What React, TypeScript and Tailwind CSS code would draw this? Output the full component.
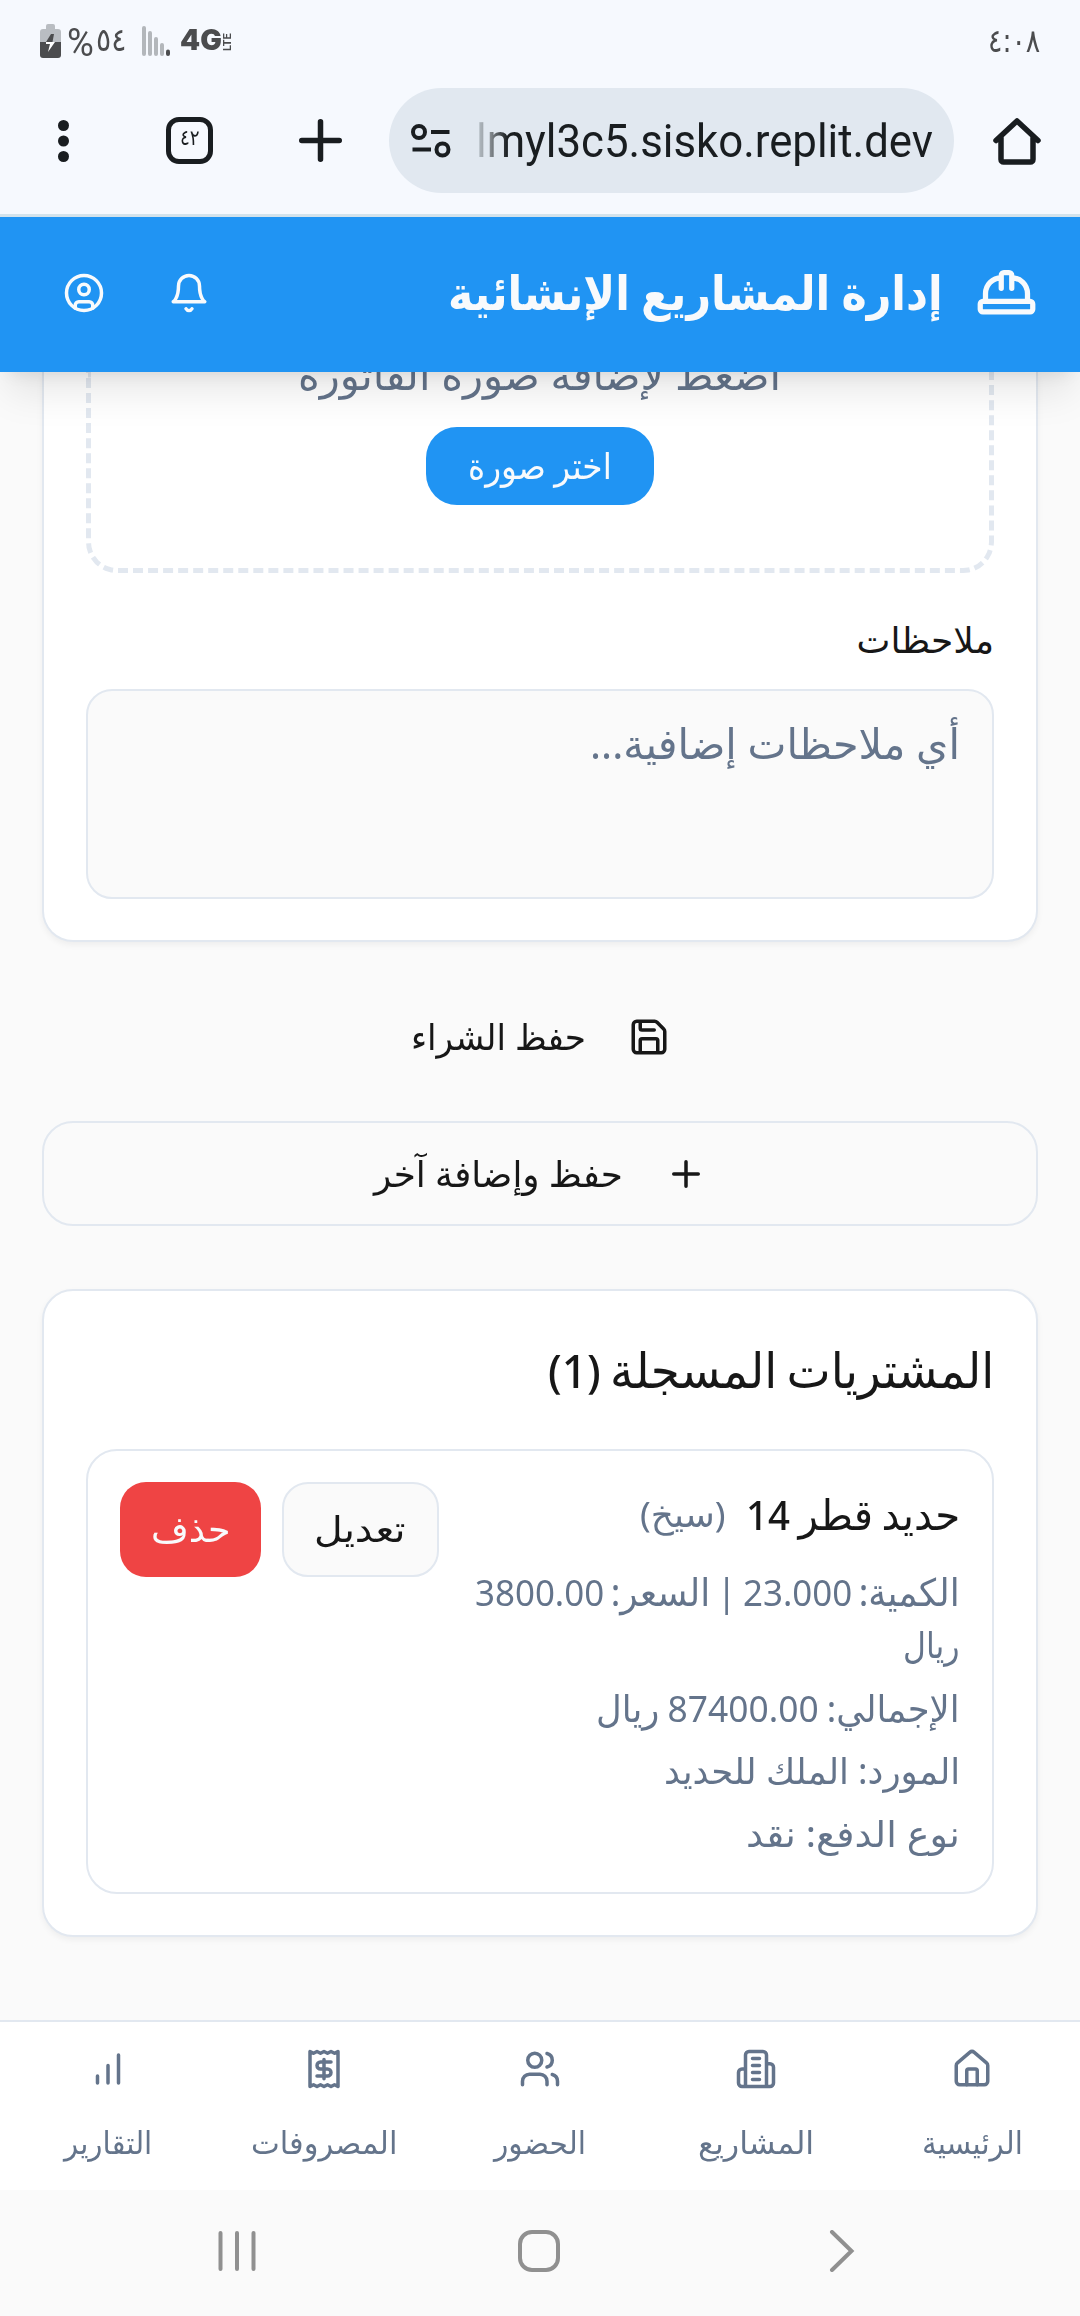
import { useLayoutEffect, useRef, useState, type ReactNode } from "react";

/* A single line of text condensed or stretched to the width of its box. */
function Fit({ className = "", inner = "", ltr = false, children }: { className?: string; inner?: string; ltr?: boolean; children: ReactNode }) {
  const box = useRef<HTMLSpanElement>(null);
  const line = useRef<HTMLSpanElement>(null);
  const [scale, setScale] = useState(1);
  useLayoutEffect(() => {
    if (box.current && line.current) setScale(box.current.clientWidth / line.current.offsetWidth);
  }, []);
  return (
    <span ref={box} dir={ltr ? "ltr" : "rtl"} className={`block shrink-0 whitespace-nowrap ${className}`}>
      <span
        ref={line}
        className={`inline-block align-top ${ltr ? "origin-left" : "origin-right"} ${inner}`}
        style={{ transform: `scaleX(${scale})` }}
      >
        {children}
      </span>
    </span>
  );
}

function Icon({ className = "size-[42px]", children }: { className?: string; children: ReactNode }) {
  return (
    <svg viewBox="0 0 24 24" fill="none" stroke="currentColor" strokeWidth="2" strokeLinecap="round" strokeLinejoin="round" className={`shrink-0 ${className}`}>
      {children}
    </svg>
  );
}

function StatusBar() {
  return (
    <div dir="ltr" className="flex h-[88px] items-start justify-between pl-[40px] pr-[40px] text-[#4b4c4e]">
      <div className="flex items-start">
        <svg viewBox="0 0 21 34" className="mt-[24px] h-[34px] w-[21px]">
          <path d="M6 5V2a2 2 0 0 1 2-2h5a2 2 0 0 1 2 2v3h3a3 3 0 0 1 3 3v11H0V8a3 3 0 0 1 3-3Z" fill="#b9bdc2" />
          <path d="M0 18h21v13a3 3 0 0 1-3 3H3a3 3 0 0 1-3-3Z" fill="#4b4c4e" />
          <path d="M11 10h3l-1.5 8H6Z" fill="#4b4c4e" />
          <path d="M6 18h9l-7 10 2-8H6Z" fill="#fff" />
        </svg>
        <Fit ltr className="ml-[6px] mt-[21px] w-[27px] font-[Roboto] text-[38px] leading-[44px]">%</Fit>
        <Fit ltr className="ml-[2px] mt-[18px] w-[30px] font-['DejaVu_Sans'] text-[32px] leading-[44px]">٥٤</Fit>
        <svg viewBox="0 0 28 30" className="ml-[16px] mt-[26px] h-[30px] w-[28px]" strokeWidth="4" strokeLinecap="round">
          <path d="M2 2v26M8 7v21M14 13v15M20 19v9" stroke="#b3b7bb" />
          <path d="M26 25.500v2.500" stroke="#4b4c4e" />
        </svg>
        <Fit ltr className="ml-[10px] mt-[20px] w-[42px] font-[Inter] text-[28px] font-black leading-[40px]">4G</Fit>
        <span className="mt-[29px] h-[22px] w-[11px] rotate-180 font-[Roboto] text-[11px] font-bold leading-[11px] [writing-mode:vertical-rl]">LTE</span>
      </div>
      <Fit ltr className="mt-[19px] w-[52px] font-['DejaVu_Sans'] text-[32px] leading-[44px]">٤:٠٨</Fit>
    </div>
  );
}

function Toolbar() {
  return (
    <div dir="ltr" className="flex h-[105px] items-center pl-[58px] text-[#191d20]">
      <svg viewBox="0 0 11 44" fill="currentColor" className="h-[44px] w-[11px]">
        <circle cx="5.500" cy="6.500" r="5.500" />
        <circle cx="5.500" cy="22" r="5.500" />
        <circle cx="5.500" cy="37.500" r="5.500" />
      </svg>
      <div className="ml-[97px] flex size-[47px] items-center justify-center rounded-[13px] border-[5px] border-[#191d20]">
        <Fit ltr className="mt-[-6px] w-[20px] font-['DejaVu_Sans'] text-[21px] leading-[30px]">٤٢</Fit>
      </div>
      <svg viewBox="0 0 43 43" fill="none" stroke="currentColor" strokeWidth="5.500" strokeLinecap="round" className="ml-[86px] size-[43px]">
        <path d="M21.500 2.750v37.500M2.750 21.500h37.500" />
      </svg>
      <div className="ml-[47px] flex h-[105px] w-[565px] items-center rounded-full bg-[#e1e8f0] pl-[22px]">
        <svg viewBox="0 0 40 34" fill="none" stroke="currentColor" strokeWidth="4" className="h-[34px] w-[40px]">
          <circle cx="8" cy="8" r="6" />
          <circle cx="31.500" cy="25.500" r="6" />
          <path d="M20 8h18.500M1.500 25.500h18.500" />
        </svg>
        <Fit ltr className="ml-[25px] w-[457px] font-[Roboto] text-[46px] leading-[60px]" inner="bg-linear-to-r from-[#bcc4cb] from-0% via-[#8a9095] via-3% to-[#191d20] to-7% bg-clip-text text-transparent">
          lmyl3c5.sisko.replit.dev
        </Fit>
      </div>
      <svg viewBox="0 0 48 48" fill="none" stroke="currentColor" strokeWidth="5.500" strokeLinejoin="round" strokeLinecap="round" className="ml-[39px] size-[48px]">
        <path d="M3 23.500 24 4l21 19.500M8 20v22.500a2.500 2.500 0 0 0 2.500 2.500h27a2.500 2.500 0 0 0 2.500-2.500V20" />
      </svg>
    </div>
  );
}

function Header() {
  return (
    <header className="relative z-10 flex h-[155px] shrink-0 items-center bg-[#2094f3] px-[42px] text-[#f8fafc] shadow-[0_26px_39px_-8px_rgb(0_0_0/0.1),0_10px_16px_-10px_rgb(0_0_0/0.1)]">
      <Icon className="mt-[-3px] size-[63px]">
        <path d="M2 18a1 1 0 0 0 1 1h18a1 1 0 0 0 1-1v-2a1 1 0 0 0-1-1H3a1 1 0 0 0-1 1v2z" />
        <path d="M10 10V5a1 1 0 0 1 1-1h2a1 1 0 0 1 1 1v5M4 15v-3a6 6 0 0 1 6-6M14 6a6 6 0 0 1 6 6v3" />
      </Icon>
      <Fit className="mr-[32px] mt-[-5px] w-[495px] text-[47px] font-bold leading-[60px]">إدارة المشاريع الإنشائية</Fit>
      <div className="mr-auto mt-[-3px] flex gap-[63px] pl-[21px]">
        <Icon>
          <path d="M6 8a6 6 0 0 1 12 0c0 7 3 9 3 9H3s3-2 3-9M10.300 21a1.940 1.940 0 0 0 3.400 0" />
        </Icon>
        <Icon>
          <circle cx="12" cy="12" r="10" />
          <circle cx="12" cy="10" r="3" />
          <path d="M7 20.662V19a2 2 0 0 1 2-2h6a2 2 0 0 1 2 2v1.662" />
        </Icon>
      </div>
    </header>
  );
}

const card = "mx-[42px] rounded-[31px] border-2 border-[#e2e8f0] bg-white shadow-[0_3px_6px_rgb(0_0_0/0.05)]";

function NotesCard() {
  return (
    <section className="mx-[42px] h-[570px] rounded-b-[31px] border-x-2 border-b-2 border-[#e2e8f0] bg-white px-[42px] shadow-[0_3px_6px_rgb(0_0_0/0.05)]">
      <div className="flex h-[201px] flex-col items-center rounded-b-[31px] border-x-[5px] border-b-[5px] border-dashed border-[#e2e8f0]">
        <Fit className="mt-[-18px] w-[483px] text-[42px] leading-[40px] text-[#64748b]">اضغط لإضافة صورة الفاتورة</Fit>
        <button className="mt-[33px] flex h-[78px] w-[228px] items-center justify-center rounded-[31px] bg-[#2094f3] text-[#f8fafc]">
          <Fit className="mt-[-1px] w-[144px] text-[36px] leading-[40px]">اختر صورة</Fit>
        </button>
      </div>
      <Fit className="mt-[47px] w-[137px] text-[36px] leading-[40px] text-[#171717]">ملاحظات</Fit>
      <div className="mt-[29px] h-[210px] rounded-[26px] border-2 border-[#e2e8f0] bg-[#fafafa] px-[32px] pt-[25px]">
        <Fit className="w-[370px] text-[42px] leading-[54px] text-[#64748b]">أي ملاحظات إضافية...</Fit>
      </div>
    </section>
  );
}

function Num({ children }: { children: ReactNode }) {
  return <span className="text-[37px] leading-none">{children}</span>;
}

function PurchasesCard() {
  return (
    <section className={`${card} mt-[63px] h-[648px] px-[42px] pt-[48px]`}>
      <Fit className="h-[60px] w-[446px] text-[49px] font-medium leading-[60px] [word-spacing:-3px]">
        المشتريات المسجلة <span className="text-[46px] leading-none">(1)</span>
      </Fit>
      <div className="mt-[50px] flex h-[445px] items-start justify-between rounded-[31px] border-2 border-[#e2e8f0] px-[32px] pt-[32px] text-[#64748b]">
        <div>
          <div className="mt-[3px] flex h-[56px]">
            <Fit className="w-[214px] text-[42px] font-medium leading-[56px] text-[#171717] [word-spacing:-2px]">
              حديد قطر <span className="text-[40px] leading-none">14</span>
            </Fit>
            <Fit className="mr-[21px] w-[85px] text-[35px] leading-[56px]">(سيخ)</Fit>
          </div>
          <Fit className="mt-[22px] h-[54px] w-[485px] text-[38px] leading-[54px] [word-spacing:-3px]">
            الكمية: <Num>23.000</Num> | السعر: <Num>3800.00</Num>
          </Fit>
          <Fit className="h-[54px] w-[57px] text-[36px] leading-[54px]">ريال</Fit>
          <Fit className="mt-[9px] h-[54px] w-[364px] text-[37px] leading-[54px] [word-spacing:-1px]">
            الإجمالي: <Num>87400.00</Num> ريال
          </Fit>
          <Fit className="mt-[9px] h-[54px] w-[296px] text-[36px] leading-[54px]">المورد: الملك للحديد</Fit>
          <Fit className="mt-[9px] h-[54px] w-[214px] text-[36px] leading-[54px]">نوع الدفع: نقد</Fit>
        </div>
        <div className="mt-[-1px] flex gap-[21px]">
          <button className="flex h-[95px] w-[157px] items-center justify-center rounded-[26px] border-2 border-[#e2e8f0] bg-[#fafafa] pl-[6px] text-[#171717]">
            <Fit className="mt-[-2px] w-[92px] text-[36px] leading-[40px]">تعديل</Fit>
          </button>
          <button className="flex h-[95px] w-[141px] items-center justify-center rounded-[26px] bg-[#ef4444] pl-[1px] text-[#f8fafc]">
            <Fit className="mt-[-2px] w-[79px] text-[36px] leading-[40px]">حذف</Fit>
          </button>
        </div>
      </div>
    </section>
  );
}

function NavItem({ width, label, children }: { width: string; label: string; children: ReactNode }) {
  return (
    <div className="flex w-[216px] flex-col items-center pt-[26px]">
      <Icon>{children}</Icon>
      <Fit className={`mt-[32px] text-[31px] leading-[40px] ${width}`}>{label}</Fit>
    </div>
  );
}

function BottomNav() {
  return (
    <nav className="flex h-[170px] shrink-0 border-t-2 border-[#e2e8f0] bg-white text-[#64748b]">
      <NavItem width="w-[101px]" label="الرئيسية">
        <path d="M15 21v-8a1 1 0 0 0-1-1h-4a1 1 0 0 0-1 1v8" />
        <path d="M3 10a2 2 0 0 1 .709-1.528l7-5.999a2 2 0 0 1 2.582 0l7 5.999A2 2 0 0 1 21 10v9a2 2 0 0 1-2 2H5a2 2 0 0 1-2-2z" />
      </NavItem>
      <NavItem width="w-[116px]" label="المشاريع">
        <path d="M6 22V4a2 2 0 0 1 2-2h8a2 2 0 0 1 2 2v18ZM6 12H4a2 2 0 0 0-2 2v6a2 2 0 0 0 2 2h2M18 9h2a2 2 0 0 1 2 2v9a2 2 0 0 1-2 2h-2M10 6h4M10 10h4M10 14h4M10 18h4" />
      </NavItem>
      <NavItem width="w-[92px]" label="الحضور">
        <path d="M16 21v-2a4 4 0 0 0-4-4H6a4 4 0 0 0-4 4v2M22 21v-2a4 4 0 0 0-3-3.870M16 3.130a4 4 0 0 1 0 7.750" />
        <circle cx="9" cy="7" r="4" />
      </NavItem>
      <NavItem width="w-[146px]" label="المصروفات">
        <path d="M4 2v20l2-1 2 1 2-1 2 1 2-1 2 1 2-1 2 1V2l-2 1-2-1-2 1-2-1-2 1-2-1-2 1ZM16 8h-6a2 2 0 1 0 0 4h4a2 2 0 1 1 0 4H8M12 17.500v-11" />
      </NavItem>
      <NavItem width="w-[88px]" label="التقارير">
        <path d="M12 20V10M18 20V4M6 20v-4" />
      </NavItem>
    </nav>
  );
}

function SystemNav() {
  return (
    <div dir="ltr" className="flex h-[126px] shrink-0 justify-center pt-[40px] text-[#909090]">
      <div className="flex w-[302px] justify-center">
        <svg viewBox="0 0 42 42" fill="none" stroke="currentColor" strokeWidth="4" strokeLinecap="round" className="ml-[-2px] size-[42px]">
          <path d="M4.500 3v36M21 3v36M37.500 3v36" />
        </svg>
      </div>
      <div className="flex w-[302px] justify-center">
        <svg viewBox="0 0 42 42" fill="none" stroke="currentColor" strokeWidth="4" className="ml-[-2px] size-[42px]">
          <rect x="2" y="2" width="38" height="38" rx="12" />
        </svg>
      </div>
      <div className="flex w-[302px] justify-center">
        <svg viewBox="0 0 42 42" fill="none" stroke="currentColor" strokeWidth="4" strokeLinecap="round" className="size-[42px]">
          <path d="m11 2 19.500 19-19.500 19" />
        </svg>
      </div>
    </div>
  );
}

export default function App() {
  return (
    <div dir="rtl" className="flex h-[2316px] w-[1080px] flex-col overflow-hidden bg-[#fafafa] font-['Noto_Sans','DejaVu_Sans',sans-serif] text-[#171717]">
      <div className="h-[217px] shrink-0 border-b-[3px] border-[#d3e3ec] bg-[#f6f9fe]">
        <StatusBar />
        <Toolbar />
      </div>
      <Header />
      <main className="h-[1648px] shrink-0 overflow-hidden">
        <NotesCard />
        <button className="mx-[42px] mt-[42px] flex h-[105px] w-[996px] items-center justify-center gap-[42px]">
          <Icon>
            <path d="M15.200 3a2 2 0 0 1 1.400.6l3.800 3.800a2 2 0 0 1 .6 1.400V19a2 2 0 0 1-2 2H5a2 2 0 0 1-2-2V5a2 2 0 0 1 2-2zM17 21v-7a1 1 0 0 0-1-1H8a1 1 0 0 0-1 1v7M7 3v4a1 1 0 0 0 1 1h7" />
          </Icon>
          <Fit className="w-[175px] text-[36px] leading-[40px]">حفظ الشراء</Fit>
        </button>
        <button className="mx-[42px] mt-[32px] flex h-[105px] w-[996px] items-center justify-center gap-[42px] rounded-[31px] border-2 border-[#e2e8f0]">
          <Icon>
            <path d="M5 12h14M12 5v14" />
          </Icon>
          <Fit className="w-[249px] text-[36px] leading-[40px]">حفظ وإضافة آخر</Fit>
        </button>
        <PurchasesCard />
      </main>
      <BottomNav />
      <SystemNav />
    </div>
  );
}
